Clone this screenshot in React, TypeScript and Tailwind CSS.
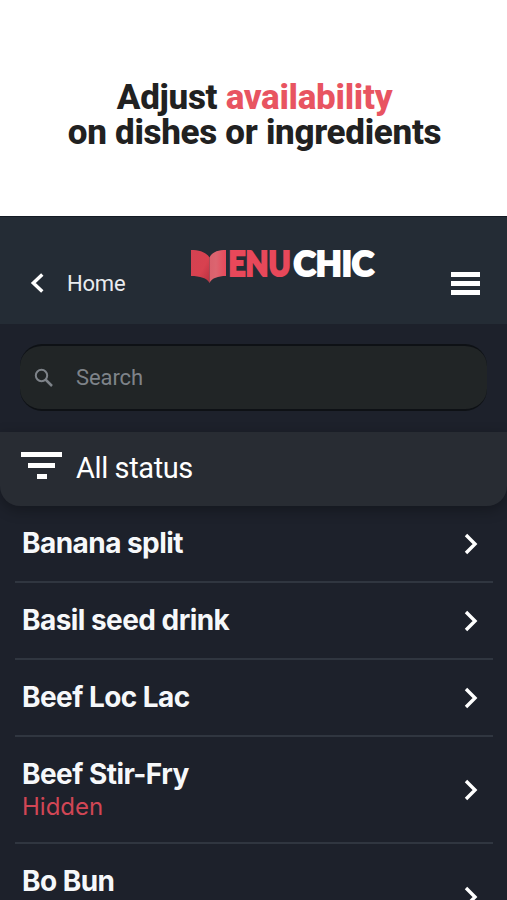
type Dish = {
  name: string;
  status?: string;
};

const dishes: Dish[] = [
  { name: "Banana split" },
  { name: "Basil seed drink" },
  { name: "Beef Loc Lac" },
  { name: "Beef Stir-Fry", status: "Hidden" },
  { name: "Bo Bun", status: "Hidden" },
];

function Logo() {
  return (
    <svg width="188" height="44" viewBox="0 -3 188 44" role="img" aria-label="MenuChic" className="overflow-visible">
      <defs>
        <linearGradient id="leftPage" x1="0" y1="0" x2="1" y2="1">
          <stop offset="0" stopColor="#d34252" />
          <stop offset="0.6" stopColor="#d8414f" />
          <stop offset="1" stopColor="#b93040" />
        </linearGradient>
        <linearGradient id="rightPage" x1="0" y1="0" x2="1" y2="0">
          <stop offset="0" stopColor="#d9606c" />
          <stop offset="0.4" stopColor="#dc6570" />
          <stop offset="1" stopColor="#e8485a" />
        </linearGradient>
      </defs>
      <path d="M1 3 C9 3 16 5 19.5 10.5 L19.5 36 C17 31 10 29 1 29 Z" fill="url(#leftPage)" />
      <path d="M19.5 10.5 C22 5 28 3 36 3 L36 29 C28 29 22 31 19.5 36 Z" fill="url(#rightPage)" />
      <text
        x="38.5"
        y="28.5"
        fontSize="34.5"
        textLength="62"
        lengthAdjust="spacingAndGlyphs"
        fill="#e8485a"
        stroke="#e8485a"
        strokeWidth="2.2"
        className="font-['Lato',sans-serif] font-black"
      >
        ENU
      </text>
      <text
        x="103.5"
        y="28.5"
        fontSize="34.5"
        textLength="80.5"
        lengthAdjust="spacingAndGlyphs"
        fill="#ffffff"
        stroke="#ffffff"
        strokeWidth="2.2"
        className="font-['Lato',sans-serif] font-black"
      >
        CHIC
      </text>
    </svg>
  );
}

function Header() {
  return (
    <header className="relative flex h-[108px] items-center justify-between border-t border-[#141a24] bg-[#242c35] pl-[30px] pr-[27px] pt-[25px]">
      <a href="#" className="flex items-center gap-[23px] text-[#e9ebee]">
        <svg width="14" height="22" viewBox="0 0 14 22" fill="none">
          <path d="M12.3 2.5 L3.3 11 L12.3 19.5" stroke="#fff" strokeWidth="3.4" />
        </svg>
        <span className="pt-0.5 text-[22px] leading-7 tracking-[-0.2px]">Home</span>
      </a>
      <div className="absolute left-[190px] top-[27px]">
        <Logo />
      </div>
      <button type="button" aria-label="Menu" className="flex flex-col gap-1">
        <span className="h-[5px] w-[29px] bg-white" />
        <span className="h-[5px] w-[29px] bg-white" />
        <span className="h-[5px] w-[29px] bg-white" />
      </button>
    </header>
  );
}

function SearchBox() {
  return (
    <div className="h-[108px] px-5 pt-5">
      <label className="flex h-[67px] items-center gap-[22px] rounded-[22px] border-y-2 border-[#0e1115] bg-[#212526] pl-3.5 text-[#7e8389]">
        <svg width="20" height="20" viewBox="0 0 20 20" fill="none" stroke="currentColor">
          <circle cx="7.5" cy="7.5" r="5.7" strokeWidth="2" />
          <path d="M11.5 11.5 L18 18" strokeWidth="2.5" />
        </svg>
        <span className="text-[22px] leading-7 tracking-[-0.1px]">Search</span>
      </label>
    </div>
  );
}

function StatusFilter() {
  return (
    <button
      type="button"
      className="relative flex h-[74px] w-full items-center gap-3.5 rounded-b-[20px] bg-[#282c33] pb-1 pl-[21px] text-white shadow-[0_4px_14px_rgba(0,0,0,0.3)]"
    >
      <span className="flex w-[41px] flex-col items-center gap-1.5 pb-1">
        <span className="h-[5px] w-[41px] bg-white" />
        <span className="h-[5px] w-[27px] bg-white" />
        <span className="h-[5px] w-[10px] bg-white" />
      </span>
      <span className="pt-0.5 text-[29px] leading-9 tracking-[-0.4px]">All status</span>
    </button>
  );
}

function DishRow({ name, status }: Dish) {
  return (
    <li className="flex items-center justify-between border-b-2 border-[#303640] pb-5 pl-[7px] pr-[15px] pt-[20px]">
      <div className="font-['Inter',sans-serif]">
        <p className="text-[28px] font-bold leading-[35px] tracking-[-0.55px] text-[#f6f8fa]">{name}</p>
        {status && <p className="text-[24px] leading-[30px] text-[#d14655]">{status}</p>}
      </div>
      <svg width="14" height="22" viewBox="0 0 14 22" fill="none">
        <path d="M2 2 L11 11 L2 20" stroke="#fff" strokeWidth="3.4" />
      </svg>
    </li>
  );
}

export default function App() {
  return (
    <div className="h-[900px] w-[507px] overflow-hidden bg-[#1d212b] font-['Roboto',sans-serif]">
      <div className="h-[216px] bg-white pt-[80px]">
        <h1 className="pl-0.5 text-center text-[35px] font-extrabold leading-[35px] tracking-[-0.3px] text-[#212121]">
          Adjust <span className="text-[#e85461]">availability</span>
          <br />
          on dishes or ingredients
        </h1>
      </div>
      <Header />
      <SearchBox />
      <StatusFilter />
      <ul className="pl-[15px] pr-3.5">
        {dishes.map((dish) => (
          <DishRow key={dish.name} {...dish} />
        ))}
      </ul>
    </div>
  );
}
